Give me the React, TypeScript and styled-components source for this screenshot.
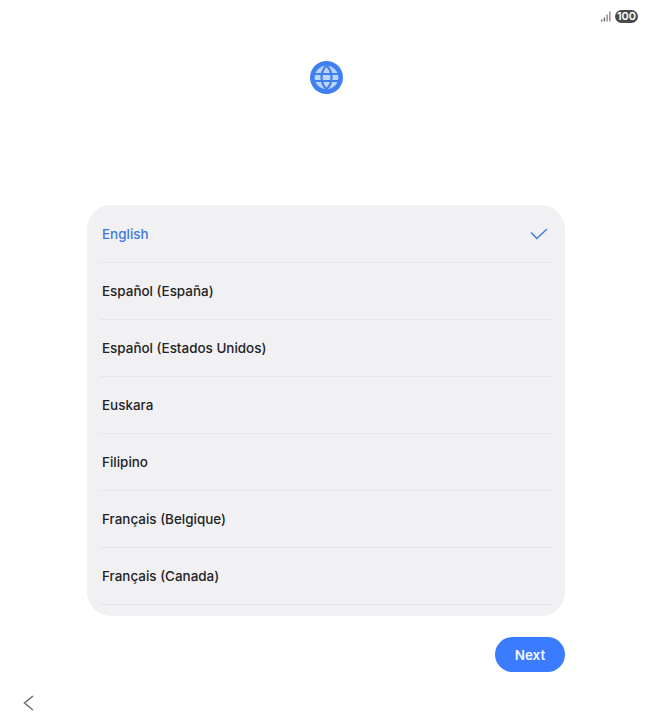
import React from "react";
import styled, { createGlobalStyle } from "styled-components";

const Global = createGlobalStyle`
  html, body { margin: 0; padding: 0; background: #fff; }
  body { font-family: Inter, "Noto Sans", sans-serif; }
`;

const Page = styled.div`
  width: 652px;
  height: 724px;
  display: flex;
  flex-direction: column;
  overflow: hidden;
  background: #fff;
`;

const StatusBar = styled.div`
  height: 24px;
  padding: 10px 14px 0 0;
  box-sizing: border-box;
  display: flex;
  justify-content: flex-end;
  align-items: flex-start;
  gap: 4px;
`;

const Signal = styled.svg`
  width: 10px;
  height: 11px;
  margin-top: 1px;
`;

const Battery = styled.div`
  width: 23px;
  height: 13px;
  border-radius: 7px;
  background: #4a4a4c;
  color: #fff;
  font-size: 11px;
  font-weight: 600;
  line-height: 13px;
  text-align: center;
  letter-spacing: -0.1px;
`;

const Hero = styled.div`
  height: 181px;
  display: flex;
  justify-content: center;
  padding-top: 37px;
  box-sizing: border-box;
`;

const Globe = styled.svg`
  width: 33px;
  height: 33px;
`;

const Card = styled.ul`
  list-style: none;
  margin: 0 0 0 87px;
  padding: 1px 13px 11px;
  width: 478px;
  height: 411px;
  box-sizing: border-box;
  border-radius: 24px;
  background: #f1f1f4;
`;

const Row = styled.li<{ $selected?: boolean }>`
  height: 57px;
  box-sizing: border-box;
  border-bottom: 1px solid #e7e7ea;
  padding: 0 3px 0 2px;
  display: flex;
  align-items: center;
  justify-content: space-between;
  font-size: 13.45px;
  font-weight: 500;
  color: ${(p) => (p.$selected ? "#3f78dc" : "#232325")};
`;

const Check = styled.svg`
  width: 18px;
  height: 12px;
  margin-right: 1px;
`;

const Actions = styled.div`
  margin: 21px 87px 0 0;
  display: flex;
  justify-content: flex-end;
`;

const NextButton = styled.button`
  width: 70px;
  height: 35px;
  border: 0;
  padding: 0;
  border-radius: 18px;
  background: #3b7cff;
  color: #f4f7ff;
  font-family: inherit;
  font-size: 13.45px;
  font-weight: 600;
`;

const BottomBar = styled.div`
  padding: 23px 0 0 23px;
`;

const Back = styled.svg`
  display: block;
  width: 11px;
  height: 16px;
`;

const languages = [
  "Español (España)",
  "Español (Estados Unidos)",
  "Euskara",
  "Filipino",
  "Français (Belgique)",
  "Français (Canada)",
];

export default function App() {
  return (
    <Page>
      <Global />
      <StatusBar>
        <Signal viewBox="0 0 10 11">
          <rect x="0" y="8.5" width="1.4" height="2" fill="#6a6a6c" />
          <rect x="2.7" y="6.5" width="1.4" height="4" fill="#6a6a6c" />
          <rect x="5.4" y="3.5" width="1.4" height="7" fill="#8a8a8c" />
          <rect x="8.1" y="0.5" width="1.4" height="10" fill="#8a8a8c" />
        </Signal>
        <Battery>100</Battery>
      </StatusBar>
      <Hero>
        <Globe viewBox="0 0 33 33">
          <circle cx="16.5" cy="16.5" r="16.5" fill="#3f7ff0" />
          <circle cx="16.5" cy="16.5" r="11.8" fill="#bcd3fa" />
          <path d="M16.5 4.8c-3.8 3.4-5 7.6-5 11.7s1.2 8.3 5 11.7" stroke="#3f7ff0" strokeWidth="2.2" fill="none" />
          <path d="M16.5 4.8c3.8 3.4 5 7.6 5 11.7s-1.2 8.3-5 11.7" stroke="#3f7ff0" strokeWidth="2.2" fill="none" />
          <path d="M4 13h25M4 20h25" stroke="#3f7ff0" strokeWidth="2" fill="none" />
        </Globe>
      </Hero>
      <Card>
        <Row $selected>
          English
          <Check viewBox="0 0 18 12">
            <path d="M1 4.5 6.8 10.5 17 1" stroke="#3f78dc" strokeWidth="1.4" fill="none" />
          </Check>
        </Row>
        {languages.map((l) => (
          <Row key={l}>{l}</Row>
        ))}
      </Card>
      <Actions>
        <NextButton>Next</NextButton>
      </Actions>
      <BottomBar>
        <Back viewBox="0 0 11 16">
          <path d="M10 1 1.5 8 10 15" stroke="#6e6e70" strokeWidth="1.5" fill="none" />
        </Back>
      </BottomBar>
    </Page>
  );
}
